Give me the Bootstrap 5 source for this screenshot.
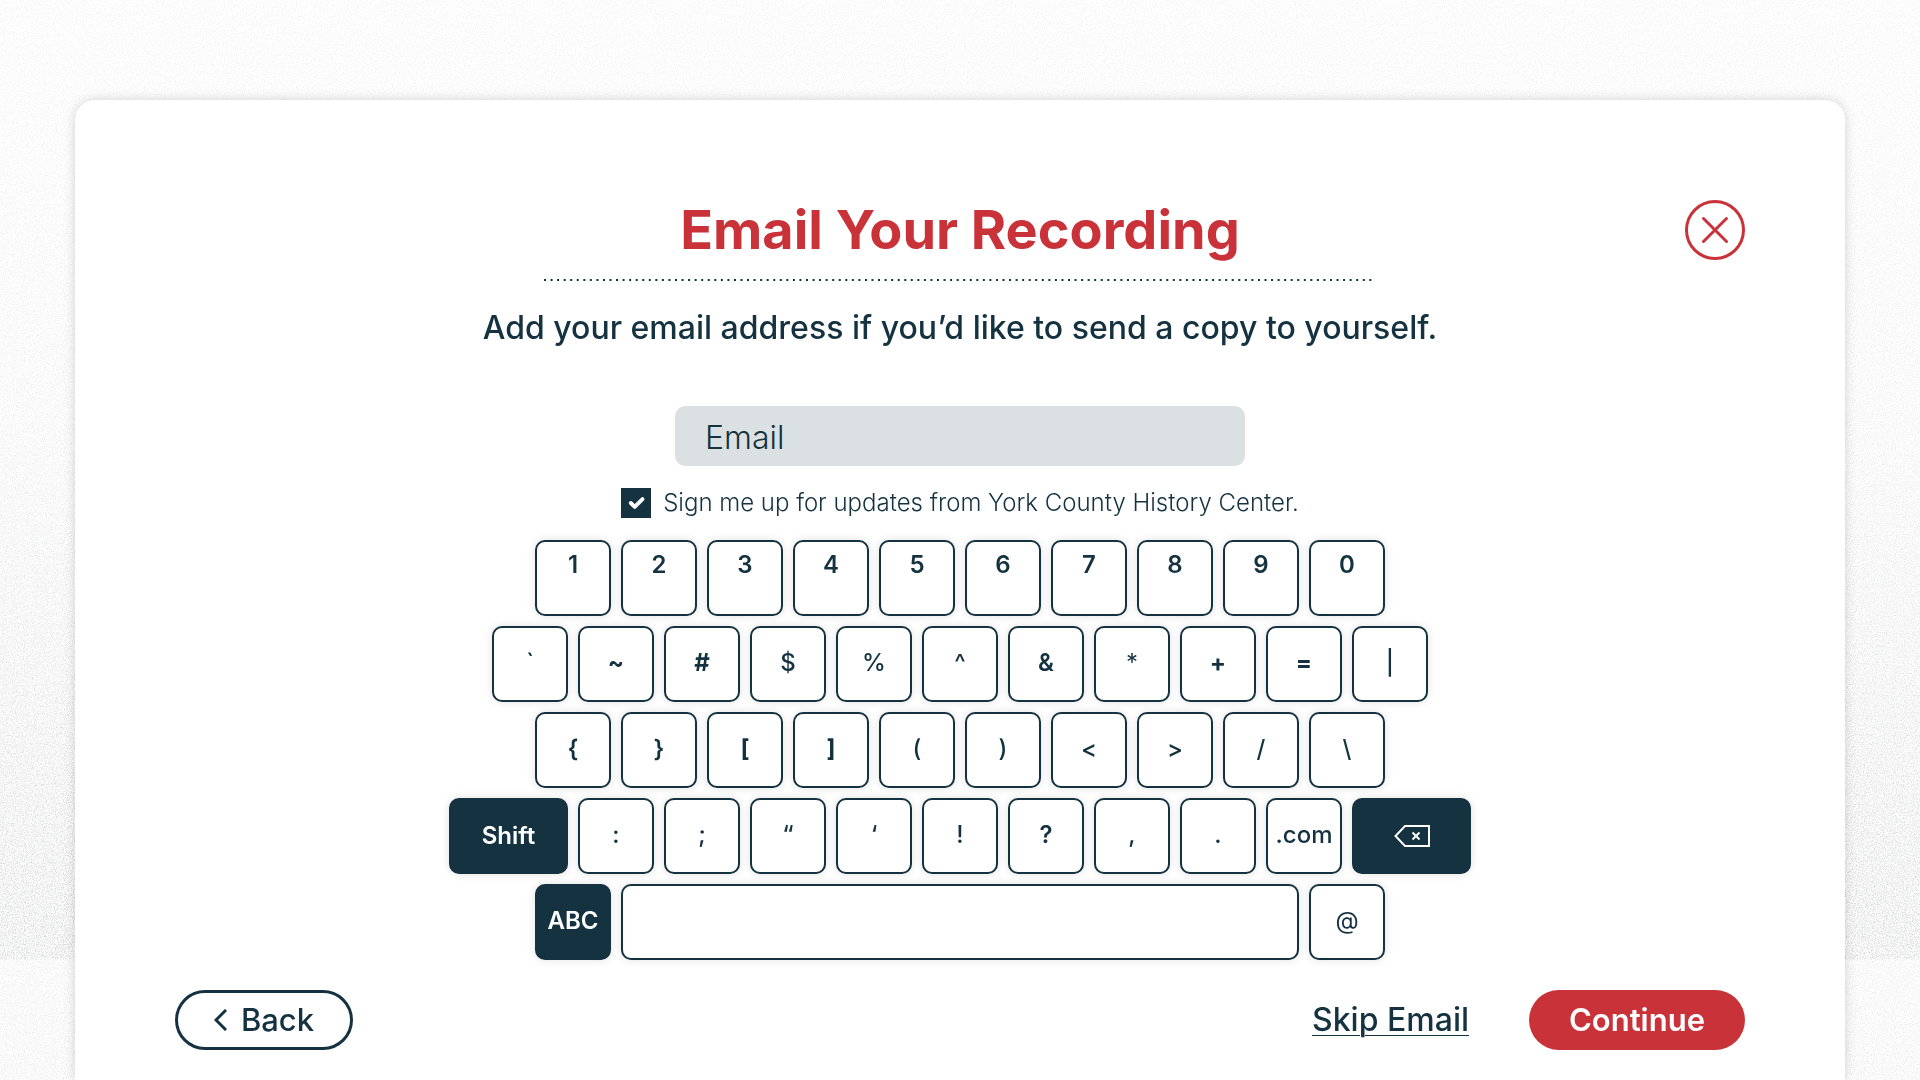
<!DOCTYPE html>
<html lang="en">
<head>
<meta charset="utf-8">
<meta name="viewport" content="width=device-width, initial-scale=1">
<title>Email Your Recording</title>
<link href="https://cdn.jsdelivr.net/npm/bootstrap@5.3.0/dist/css/bootstrap.min.css" rel="stylesheet">
<style>
  :root { --ink: #143240; --brand: #c93239; --field: #dbe0e2; }
  body { font-family: Inter, "Open Sans", sans-serif; color: var(--ink); background: #fff; overflow: hidden; }
  .grain { position: fixed; inset: 0; z-index: -1; }
  .panel { min-height: calc(100vh - 100px); margin: 100px 75px 0; padding: 100px 100px 30px; border-radius: 20px 20px 0 0; box-shadow: 0 0 12px rgba(0,0,0,.17); }
  .title { font-size: 54px; line-height: 60px; font-weight: 700; color: var(--brand); }
  .close-btn { position: absolute; top: 0; right: 0; width: 60px; height: 60px; }
  .rule { width: 832px; height: 4px; margin-top: 18px; }
  .intro { font-size: 32px; line-height: 40px; font-weight: 500; margin-top: 26px; }
  .email-field { width: 570px; height: 60px; margin-top: 58px; padding: 2px 30px 0; font-size: 32px; font-weight: 300; border: 0; border-radius: 10px; background: var(--field); color: var(--ink); }
  .email-field::placeholder { color: var(--ink); opacity: 1; }
  .signup { margin-top: 22px; gap: 12px; font-size: 24px; line-height: 30px; font-weight: 300; }
  .signup .form-check-input { width: 30px; height: 30px; border-radius: 0; border-color: var(--ink); }
  .signup .form-check-input:checked { background-color: var(--ink); background-size: 26px; }
  .keyboard { margin-top: 22px; gap: 10px; }
  .key-row { gap: 10px; }
  .key { width: 76px; height: 76px; padding: 0 0 2px; border: 2px solid var(--ink); border-radius: 10px; background: #fff; color: var(--ink); font-size: 24px; line-height: 24px; font-weight: 500; box-shadow: 0 0 10px rgba(0,0,0,.12); }
  .key-digit { padding-bottom: 26px; font-weight: 600; }
  .key-dark { background: var(--ink); color: #fff; font-weight: 600; }
  .key-wide { width: 119px; padding: 0; }
  .key-space { width: 678px; }
  .actions { margin-top: 30px; font-size: 32px; line-height: 36px; font-weight: 500; }
  .pill { height: 60px; border-radius: 30px; font-size: 31px; line-height: 36px; }
  .pill-back { width: 178px; border: 3px solid var(--ink); color: var(--ink); background: #fff; font-weight: 500; gap: 14px; }
  .pill-next { width: 216px; background: var(--brand); color: #fff; font-weight: 600; }
  .skip { color: var(--ink); margin-right: 60px; text-decoration-thickness: 1px; text-underline-offset: 4px; }
</style>
<script src="https://cdn.jsdelivr.net/npm/bootstrap@5.3.0/dist/js/bootstrap.bundle.min.js"></script>
</head>
<body>
<svg class="grain w-100 h-100" aria-hidden="true">
  <defs>
    <filter id="noise" x="0" y="0" width="100%" height="100%" color-interpolation-filters="sRGB">
      <feTurbulence type="fractalNoise" baseFrequency="0.9" numOctaves="2" seed="4"/>
      <feColorMatrix values="0 0 0 0 .55  0 0 0 0 .56  0 0 0 0 .56  0 0 0 3 -1.2"/>
    </filter>
    <linearGradient id="fade" x2="0" y2="1">
      <stop offset="0" stop-color="#fff" stop-opacity=".08"/>
      <stop offset=".4" stop-color="#fff" stop-opacity=".14"/>
      <stop offset=".888" stop-color="#fff" stop-opacity=".34"/>
      <stop offset=".889" stop-color="#fff" stop-opacity=".14"/>
      <stop offset="1" stop-color="#fff" stop-opacity=".16"/>
    </linearGradient>
    <mask id="depth"><rect width="100%" height="100%" fill="url(#fade)"/></mask>
  </defs>
  <g mask="url(#depth)"><rect width="100%" height="100%" filter="url(#noise)"/></g>
</svg>

<main class="panel bg-white">
  <header class="position-relative d-flex flex-column align-items-center text-center">
    <h1 class="title m-0">Email Your Recording</h1>
    <button type="button" class="close-btn btn p-0 border-0 d-flex" aria-label="Close">
      <svg width="60" height="60" viewBox="0 0 60 60" fill="none" stroke="#c93239" stroke-width="3" stroke-linecap="round"><circle cx="30" cy="30" r="28.5"/><path d="M18.5 18.5 41.5 41.5M41.5 18.5 18.5 41.5"/></svg>
    </button>
    <svg class="rule" aria-hidden="true"><line x1="0" y1="2" x2="829" y2="2" stroke="#143240" stroke-width="2" stroke-dasharray="2 4.55"/></svg>
    <p class="intro mb-0">Add your email address if you’d like to send a copy to yourself.</p>
  </header>

  <form class="d-flex flex-column align-items-center" onsubmit="return false">
    <input type="email" class="email-field" placeholder="Email" aria-label="Email">
    <div class="signup d-flex align-items-center">
      <input class="form-check-input m-0" type="checkbox" id="updates" checked>
      <label for="updates">Sign me up for updates from York County History Center.</label>
    </div>
  </form>

  <section class="keyboard d-flex flex-column" aria-label="Keyboard">
    <div class="key-row d-flex justify-content-center">
      <button type="button" class="key key-digit">1</button><button type="button" class="key key-digit">2</button><button type="button" class="key key-digit">3</button><button type="button" class="key key-digit">4</button><button type="button" class="key key-digit">5</button><button type="button" class="key key-digit">6</button><button type="button" class="key key-digit">7</button><button type="button" class="key key-digit">8</button><button type="button" class="key key-digit">9</button><button type="button" class="key key-digit">0</button>
    </div>
    <div class="key-row d-flex justify-content-center">
      <button type="button" class="key">`</button><button type="button" class="key fw-bold">~</button><button type="button" class="key fw-bold">#</button><button type="button" class="key">$</button><button type="button" class="key">%</button><button type="button" class="key">^</button><button type="button" class="key fw-semibold">&amp;</button><button type="button" class="key fw-normal">*</button><button type="button" class="key fw-bold">+</button><button type="button" class="key fw-bold">=</button><button type="button" class="key">|</button>
    </div>
    <div class="key-row d-flex justify-content-center">
      <button type="button" class="key fw-semibold">{</button><button type="button" class="key fw-semibold">}</button><button type="button" class="key fw-bold">[</button><button type="button" class="key fw-bold">]</button><button type="button" class="key">(</button><button type="button" class="key">)</button><button type="button" class="key">&lt;</button><button type="button" class="key">&gt;</button><button type="button" class="key">/</button><button type="button" class="key">\</button>
    </div>
    <div class="key-row d-flex justify-content-center">
      <button type="button" class="key key-dark key-wide">Shift</button><button type="button" class="key">:</button><button type="button" class="key">;</button><button type="button" class="key">“</button><button type="button" class="key">‘</button><button type="button" class="key">!</button><button type="button" class="key fw-semibold">?</button><button type="button" class="key">,</button><button type="button" class="key">.</button><button type="button" class="key">.com</button><button type="button" class="key key-dark key-wide d-flex align-items-center justify-content-center" aria-label="Backspace"><svg width="36" height="22" viewBox="0 0 36 22" fill="none" stroke="#fff" stroke-width="2"><path d="M11 1H35V21H11L1.5 11Z"/><path d="M18.5 7.5 25.5 14.5M25.5 7.5 18.5 14.5"/></svg></button>
    </div>
    <div class="key-row d-flex justify-content-center">
      <button type="button" class="key key-dark">ABC</button><button type="button" class="key key-space" aria-label="Space"></button><button type="button" class="key fw-normal">@</button>
    </div>
  </section>

  <footer class="actions d-flex align-items-center">
    <button type="button" class="pill pill-back btn p-0 d-flex align-items-center justify-content-center">
      <svg width="13" height="22" viewBox="0 0 13 22" fill="none" stroke="#143240" stroke-width="3"><path d="M12 1 2 11 12 21"/></svg>Back
    </button>
    <a href="#" class="skip ms-auto">Skip Email</a>
    <button type="button" class="pill pill-next btn p-0 border-0">Continue</button>
  </footer>
</main>
</body>
</html>
